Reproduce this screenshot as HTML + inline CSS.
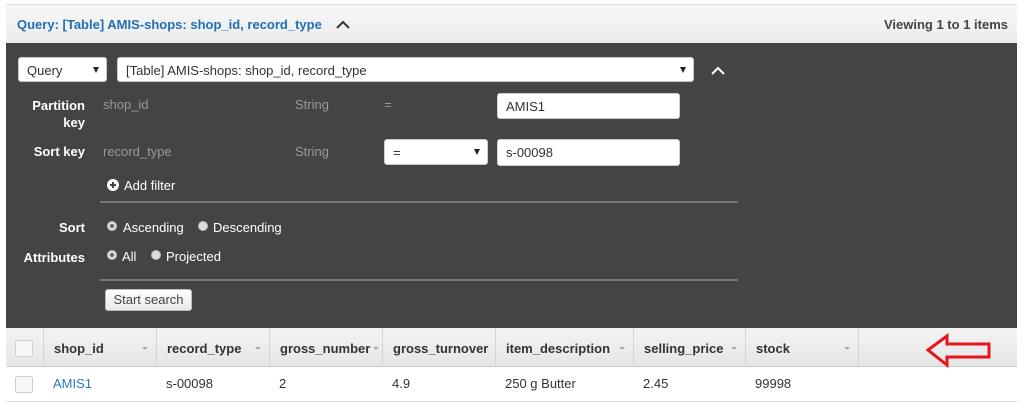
<!DOCTYPE html>
<html><head><meta charset="utf-8"><style>
*{box-sizing:border-box;margin:0;padding:0}
body{width:1024px;height:402px;background:#fff;font-family:"Liberation Sans",Arial,sans-serif;font-size:13px;position:relative;overflow:hidden}
.a{position:absolute;white-space:nowrap}
.hdr{left:6px;top:4px;width:1011px;height:39px;background:linear-gradient(#f7f7f7,#ececec);border-top:1px solid #ddd}
.dark{left:6px;top:43px;width:1011px;height:285px;background:#444}
.sel,.inp{background:#fff;border:1px solid #ccc;border-radius:3px;height:25px;color:#333;padding:5px 8px;font-size:13px}
.lbl{color:#fff;font-weight:bold;text-align:right}
.g{color:#999}
.w{color:#fff}
.tri{position:absolute;right:7px;top:9px;width:0;height:0;border-left:3.5px solid transparent;border-right:3.5px solid transparent;border-top:6px solid #222}
.rad{width:10px;height:10px;border-radius:50%;background:#ddd;border:1px solid #bbb}
.rad.on::after{content:"";position:absolute;left:2px;top:2px;width:4px;height:4px;border-radius:50%;background:#666}
.th{top:328px;height:39px;background:linear-gradient(#f3f3f3,#e6e6e6);border-bottom:1px solid #ccc}
.col{top:328px;height:39px;border-left:1px solid #d4d4d4;font-weight:bold;color:#333;padding:13px 10px}
.dd{position:absolute;right:8px;top:19px;border-left:3px solid transparent;border-right:3px solid transparent;border-top:3px solid #aaa}
.cb{width:18px;height:17px;border:1px solid #ccc;border-radius:3px;background:#f7f7f7}
.cell{top:376px;color:#333}
</style></head><body>
<div class="a hdr"></div>
<div class="a" style="left:17px;top:17px;color:#1f6fb5;font-weight:bold">Query: [Table] AMIS-shops: shop_id, record_type</div>
<svg class="a" style="left:336px;top:20px" width="14" height="10"><path d="M1 8 L7 2 L13 8" stroke="#333" stroke-width="2" fill="none"/></svg>
<div class="a" style="right:16px;top:17px;color:#444;font-weight:bold">Viewing 1 to 1 items</div>
<div class="a dark"></div>
<div class="a sel" style="left:18px;top:57px;width:89px">Query<span class="tri"></span></div>
<div class="a sel" style="left:117px;top:57px;width:577px">[Table] AMIS-shops: shop_id, record_type<span class="tri"></span></div>
<svg class="a" style="left:711px;top:66px" width="14" height="9"><path d="M1 8 L7 2 L13 8" stroke="#fff" stroke-width="2" fill="none"/></svg>
<div class="a lbl" style="left:20px;top:97px;width:65px;line-height:17px;white-space:normal">Partition key</div>
<div class="a g" style="left:103px;top:97px">shop_id</div>
<div class="a g" style="left:295px;top:97px">String</div>
<div class="a g" style="left:384px;top:97px">=</div>
<div class="a inp" style="left:497px;top:93px;width:183px;height:26px">AMIS1</div>
<div class="a lbl" style="left:20px;top:144px;width:65px">Sort key</div>
<div class="a g" style="left:103px;top:144px">record_type</div>
<div class="a g" style="left:295px;top:144px">String</div>
<div class="a sel" style="left:384px;top:139px;width:104px;height:26px">=<span class="tri"></span></div>
<div class="a inp" style="left:497px;top:139px;width:183px;height:27px">s-00098</div>
<svg class="a" style="left:107px;top:179px" width="12" height="12"><circle cx="6" cy="6" r="6" fill="#fff"/><path d="M6 3v6M3 6h6" stroke="#444" stroke-width="2"/></svg>
<div class="a w" style="left:124px;top:178px">Add filter</div>
<div class="a" style="left:100px;top:201px;width:638px;height:2px;background:#777"></div>
<div class="a lbl" style="left:20px;top:220px;width:65px">Sort</div>
<div class="a rad on" style="left:107px;top:221px"></div>
<div class="a w" style="left:123px;top:220px">Ascending</div>
<div class="a rad" style="left:198px;top:221px"></div>
<div class="a w" style="left:213px;top:220px">Descending</div>
<div class="a lbl" style="left:10px;top:250px;width:75px">Attributes</div>
<div class="a rad on" style="left:107px;top:250px"></div>
<div class="a w" style="left:122px;top:249px">All</div>
<div class="a rad" style="left:151px;top:250px"></div>
<div class="a w" style="left:166px;top:249px">Projected</div>
<div class="a" style="left:100px;top:279px;width:638px;height:2px;background:#777"></div>
<div class="a" style="left:105px;top:289px;width:87px;height:22px;background:linear-gradient(#fff,#e8e8e8);border:1px solid #bbb;border-radius:3px;color:#444;text-align:center;line-height:20px">Start search</div>
<div class="a th" style="left:6px;width:1011px"></div>
<div class="a cb" style="left:15px;top:340px"></div>
<div class="a col" style="left:43px;width:113px">shop_id<span class="dd"></span></div>
<div class="a col" style="left:156px;width:113px">record_type<span class="dd"></span></div>
<div class="a col" style="left:269px;width:113px">gross_number<span class="dd" style="right:3px"></span></div>
<div class="a col" style="left:382px;width:113px">gross_turnover</div>
<div class="a col" style="left:495px;width:138px">item_description<span class="dd"></span></div>
<div class="a col" style="left:633px;width:112px">selling_price<span class="dd"></span></div>
<div class="a col" style="left:745px;width:113px">stock<span class="dd"></span></div>
<div class="a col" style="left:858px;width:1px;padding:0"></div>
<svg class="a" style="left:925px;top:332px" width="68" height="36"><path d="M3 18 L22 4 L22 12 L64 12 L64 25 L22 25 L22 33 Z" stroke="#e4161c" stroke-width="3" fill="none" stroke-linejoin="miter"/></svg>
<div class="a cb" style="left:15px;top:376px"></div>
<div class="a cell" style="left:53px;color:#2a7ac0">AMIS1</div>
<div class="a cell" style="left:166px">s-00098</div>
<div class="a cell" style="left:279px">2</div>
<div class="a cell" style="left:392px">4.9</div>
<div class="a cell" style="left:505px">250 g Butter</div>
<div class="a cell" style="left:643px">2.45</div>
<div class="a cell" style="left:755px">99998</div>
<div class="a" style="left:6px;top:401px;width:1011px;height:1px;background:#ddd"></div>
</body></html>
